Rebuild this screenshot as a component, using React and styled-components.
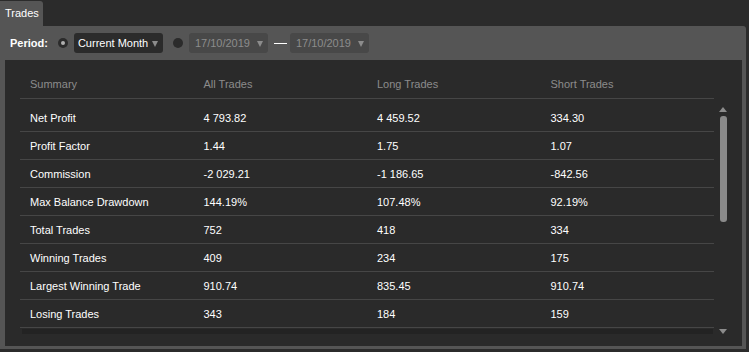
import React from "react";
import styled, { createGlobalStyle } from "styled-components";

const GlobalStyle = createGlobalStyle`
  html, body {
    margin: 0;
    padding: 0;
    background: #2b2b2b;
    font-family: "Liberation Sans", Arial, sans-serif;
    font-size: 11px;
  }
`;

const columns = ["Summary", "All Trades", "Long Trades", "Short Trades"];

const rows = [
  ["Net Profit", "4 793.82", "4 459.52", "334.30"],
  ["Profit Factor", "1.44", "1.75", "1.07"],
  ["Commission", "-2 029.21", "-1 186.65", "-842.56"],
  ["Max Balance Drawdown", "144.19%", "107.48%", "92.19%"],
  ["Total Trades", "752", "418", "334"],
  ["Winning Trades", "409", "234", "175"],
  ["Largest Winning Trade", "910.74", "835.45", "910.74"],
  ["Losing Trades", "343", "184", "159"],
];

const App = () => {
  return (
    <Page>
      <GlobalStyle />
      <TabBar>
        <Tab>Trades</Tab>
      </TabBar>
      <Panel>
        <Toolbar>
          <Label>Period:</Label>
          <Radio checked />
          <Select>
            Current Month
            <Caret />
          </Select>
          <Radio />
          <Select disabled>
            17/10/2019
            <Caret />
          </Select>
          <Dash />
          <Select disabled>
            17/10/2019
            <Caret />
          </Select>
        </Toolbar>
        <Content>
          <HeaderRow>
            {columns.map((c) => (
              <HeadCell key={c}>{c}</HeadCell>
            ))}
          </HeaderRow>
          <Body>
            <Rows>
              {rows.map((r) => (
                <Row key={r[0]}>
                  {r.map((v, i) => (
                    <Cell key={i}>{v}</Cell>
                  ))}
                </Row>
              ))}
              <HScroll />
            </Rows>
            <VScroll>
              <Arrow up />
              <Thumb />
              <Spacer />
              <Arrow />
            </VScroll>
          </Body>
        </Content>
      </Panel>
    </Page>
  );
};

export default App;

const Page = styled.div`
  width: 749px;
  height: 352px;
  overflow: hidden;
  display: flex;
  flex-direction: column;
`;

const TabBar = styled.div`
  display: flex;
  height: 26px;
  align-items: flex-end;
`;

const Tab = styled.div`
  width: 43px;
  height: 25px;
  background: #555555;
  color: #ffffff;
  border-top-right-radius: 3px;
  padding-left: 5px;
  box-sizing: border-box;
  line-height: 24px;
  font-size: 11px;
`;

const Panel = styled.div`
  width: 746px;
  height: 323px;
  background: #555555;
  border-top-right-radius: 3px;
  padding: 0 4px 3px 5px;
  box-sizing: border-box;
  display: flex;
  flex-direction: column;
`;

const Toolbar = styled.div`
  height: 34px;
  display: flex;
  align-items: center;
  padding-left: 5px;
`;

const Label = styled.div`
  color: #ffffff;
  font-weight: bold;
  font-size: 11px;
  margin-right: 10px;
`;

const Radio = styled.div`
  width: 10px;
  height: 10px;
  border-radius: 50%;
  background: #2b2b2b;
  margin-right: 6px;
  margin-left: ${(p) => (p.checked ? "0" : "10px")};
  position: relative;
  flex-shrink: 0;

  &::after {
    content: "";
    display: ${(p) => (p.checked ? "block" : "none")};
    position: absolute;
    left: 3px;
    top: 3px;
    width: 4px;
    height: 4px;
    border-radius: 50%;
    background: #b0b0b0;
  }
`;

const Select = styled.div`
  height: 20px;
  display: flex;
  align-items: center;
  padding: 0 5px 0 ${(p) => (p.disabled ? "6px" : "4px")};
  border-radius: 3px;
  background: ${(p) => (p.disabled ? "#484848" : "#2b2b2b")};
  color: ${(p) => (p.disabled ? "#8c8c8c" : "#ffffff")};
  font-size: 11px;
  width: ${(p) => (p.disabled ? "79px" : "89px")};
  box-sizing: border-box;
  justify-content: space-between;
`;

const Caret = styled.span`
  width: 0;
  height: 0;
  border-left: 3px solid transparent;
  border-right: 3px solid transparent;
  border-top: 6px solid #8c8c8c;
  margin-top: 1px;
`;

const Dash = styled.div`
  width: 13px;
  height: 1px;
  background: #ffffff;
  margin: 0 3px 0 6px;
`;

const Content = styled.div`
  flex: 1;
  background: #2a2a2a;
  padding: 8px 0 0 15px;
  display: flex;
  flex-direction: column;
`;

const HeaderRow = styled.div`
  display: grid;
  grid-template-columns: repeat(4, 1fr);
  height: 30px;
  align-items: center;
  border-bottom: 1px solid #464646;
  margin-right: 28px;
`;

const HeadCell = styled.div`
  color: #8c8c8c;
  padding-left: 10px;
  padding-top: 1px;
`;

const Body = styled.div`
  display: flex;
  padding-top: 5px;
`;

const Rows = styled.div`
  flex: 1;
  display: flex;
  flex-direction: column;
`;

const Row = styled.div`
  display: grid;
  grid-template-columns: repeat(4, 1fr);
  height: 27px;
  align-items: center;
  border-bottom: 1px solid #464646;
`;

const Cell = styled.div`
  color: #ffffff;
  padding-left: 10px;
  padding-top: 1px;
`;

const HScroll = styled.div`
  height: 5px;
  margin: 1px 1px 0 2px;
  background: #232323;
`;

const VScroll = styled.div`
  width: 14px;
  margin-left: 2px;
  margin-right: 12px;
  display: flex;
  flex-direction: column;
  align-items: center;
  padding-top: 3px;
`;

const Arrow = styled.span`
  width: 0;
  height: 0;
  border-left: 4px solid transparent;
  border-right: 4px solid transparent;
  ${(p) =>
    p.up ? "border-bottom: 5px solid #8c8c8c;" : "border-top: 5px solid #8c8c8c;"}
`;

const Thumb = styled.div`
  width: 7px;
  height: 106px;
  border-radius: 3px;
  background: #8a8a8a;
  margin-top: 4px;
`;

const Spacer = styled.div`
  flex: 1;
`;
